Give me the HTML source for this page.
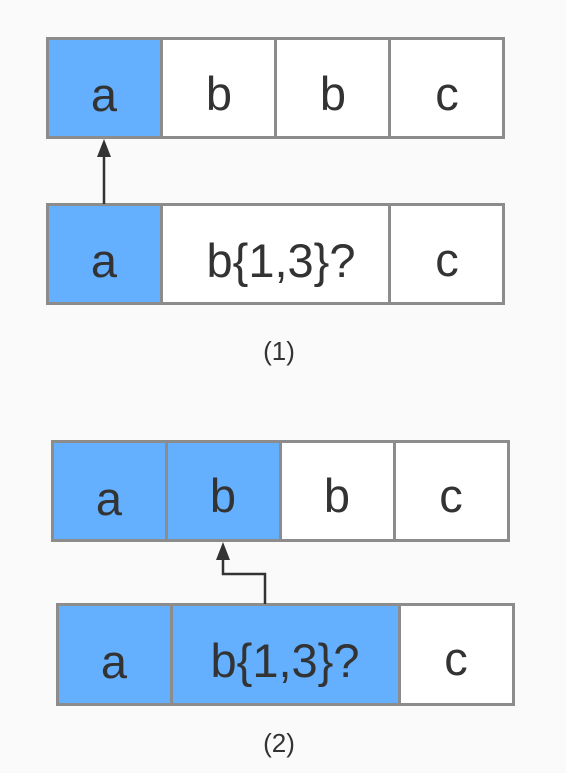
<!DOCTYPE html>
<html><head><style>html,body{margin:0;padding:0;background:#fafafa;}svg{display:block}</style></head>
<body>
<svg width="566" height="773" viewBox="0 0 566 773" xmlns="http://www.w3.org/2000/svg" font-family="Liberation Sans, sans-serif" fill="#333">
<g stroke="#8c8c8c" stroke-width="3">
<rect x="47.5" y="38.5" width="114" height="99" fill="#64b0ff"/>
<rect x="161.5" y="38.5" width="114" height="99" fill="#fff"/>
<rect x="275.5" y="38.5" width="114" height="99" fill="#fff"/>
<rect x="389.5" y="38.5" width="114" height="99" fill="#fff"/>
<rect x="47.5" y="204.5" width="114" height="99" fill="#64b0ff"/>
<rect x="161.5" y="204.5" width="228" height="99" fill="#fff"/>
<rect x="389.5" y="204.5" width="114" height="99" fill="#fff"/>
<rect x="52.5" y="441.5" width="114" height="99" fill="#64b0ff"/>
<rect x="166.5" y="441.5" width="114" height="99" fill="#64b0ff"/>
<rect x="280.5" y="441.5" width="114" height="99" fill="#fff"/>
<rect x="394.5" y="441.5" width="114" height="99" fill="#fff"/>
<rect x="57.5" y="604.5" width="114" height="100" fill="#64b0ff"/>
<rect x="171.5" y="604.5" width="228" height="100" fill="#64b0ff"/>
<rect x="399.5" y="604.5" width="114" height="100" fill="#fff"/>
</g>
<g stroke="#333" stroke-width="2.5" fill="none">
<path d="M104 204 V156"/>
<path d="M265 604 V574 H223 V558"/>
</g>
<path d="M104 139 L97 157 H111 Z"/>
<path d="M223 542 L216 560 H230 Z"/>
<g font-size="47" text-anchor="middle">
<text x="104" y="111">a</text>
<text x="219" y="110">b</text>
<text x="333" y="110">b</text>
<text x="447" y="110">c</text>
<text x="104" y="277">a</text>
<text x="281" y="277">b{1,3}?</text>
<text x="447" y="276">c</text>
<text x="109" y="515">a</text>
<text x="223" y="512">b</text>
<text x="337" y="512">b</text>
<text x="451" y="512">c</text>
<text x="114" y="678">a</text>
<text x="285" y="677">b{1,3}?</text>
<text x="456" y="675">c</text>
</g>
<g font-size="26" text-anchor="middle" fill="#333">
<text x="279" y="360">(1)</text>
<text x="279" y="752">(2)</text>
</g>
</svg>
</body></html>
